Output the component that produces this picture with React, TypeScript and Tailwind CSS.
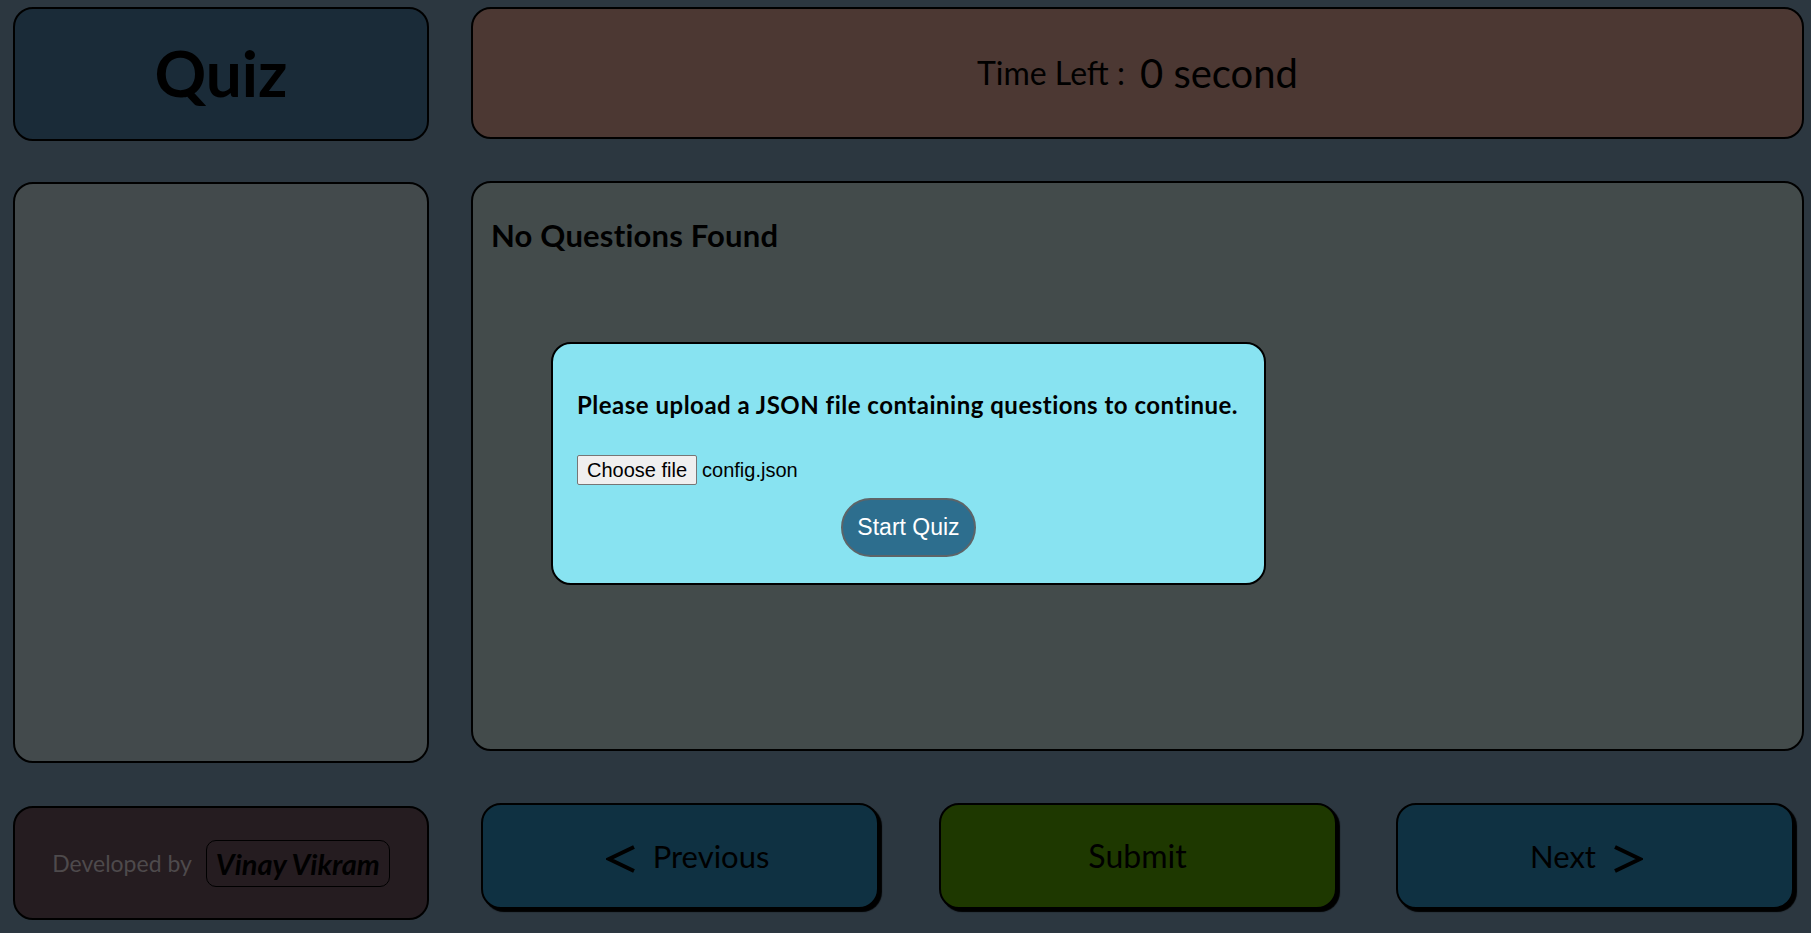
import React from "react";

const ubuntu = { fontFamily: "Lato, 'Open Sans', sans-serif" };
const arial = { fontFamily: "'Liberation Sans', Arial, sans-serif" };

function NavButton({
  bg,
  extra,
  children,
}: {
  bg: string;
  extra?: string;
  children: React.ReactNode;
}) {
  return (
    <button
      className={`w-[398px] h-[106px] rounded-[20px] border-2 border-black shadow-[3px_3px_1px_#000] flex items-center justify-center gap-[17px] text-black ${bg} ${extra ?? ""}`}
    >
      {children}
    </button>
  );
}

function Chevron({ dir }: { dir: "left" | "right" }) {
  return (
    <svg width="30" height="30" viewBox="0 0 30 30" className="mt-[6px]">
      <polyline
        points={dir === "left" ? "28,3 3,15 28,27" : "2,3 27,15 2,27"}
        fill="none"
        stroke="#000"
        strokeWidth="4"
        strokeLinejoin="miter"
      />
    </svg>
  );
}

export default function App() {
  return (
    <div
      className="w-[1811px] h-[933px] bg-[#2c3740] flex pl-[13px] pr-[7px] pt-[7px] gap-[42px] overflow-hidden"
      style={ubuntu}
    >
      {/* Left column */}
      <div className="w-[416px] flex flex-col shrink-0">
        <div className="h-[134px] rounded-[20px] border-2 border-black bg-[#1a2b38] flex items-center justify-center">
          <h1 className="text-[64px] font-bold text-black leading-none pb-[2px]">Quiz</h1>
        </div>
        <div className="mt-[41px] h-[581px] rounded-[20px] border-2 border-black bg-[#434a4c]" />
        <div className="mt-[43px] h-[114px] rounded-[20px] border-2 border-black bg-[#251c20] flex items-center justify-center gap-[14px]">
          <span className="text-[23px] text-[#4e4a4c] leading-none">Developed by</span>
          <span className="h-[47px] px-[9px] rounded-[10px] border-[1.5px] border-black flex items-center text-[29px] font-bold italic text-black leading-none">
            Vinay Vikram
          </span>
        </div>
      </div>

      {/* Right column */}
      <div className="w-[1333px] flex flex-col shrink-0">
        <div className="h-[132px] rounded-[20px] border-2 border-black bg-[#4c3833] flex items-center justify-center gap-[15px] text-black">
          <span className="text-[32px] leading-none">Time Left :</span>
          <span className="text-[40px] leading-none">0 second</span>
        </div>

        <div className="mt-[42px] h-[570px] rounded-[20px] border-2 border-black bg-[#434b4b] pl-[18px] pt-[34px]">
          <h2 className="text-[31px] font-bold text-black leading-[36px] tracking-[0.2px]">No Questions Found</h2>
          <div className="mt-[89px] ml-[60px] w-[715px] h-[243px] rounded-[20px] border-2 border-black bg-[#88e3f1] pl-[24px] pt-[47px] flex flex-col">
            <p className="text-[24px] font-bold text-black leading-[28px] tracking-[0.5px]">
              Please upload a JSON file containing questions to continue.
            </p>
            <div className="mt-[36px] flex items-center gap-[5px] h-[30px]" style={arial}>
              <span className="h-[30px] px-[9px] flex items-center bg-[#efefef] border border-[#767676] rounded-[2px] text-[20px] text-black leading-none">
                Choose file
              </span>
              <span className="text-[20px] text-black leading-none">config.json</span>
            </div>
            <div className="mt-[13px] flex justify-center pr-[24px]">
              <button
                className="h-[59px] px-[14px] rounded-full bg-[#2d6e8e] border-2 border-[#5d6468] text-white text-[23px] leading-none"
                style={arial}
              >
                Start Quiz
              </button>
            </div>
          </div>
        </div>

        <div className="mt-[52px] flex justify-between pl-[10px] pr-[10px]">
          <NavButton bg="bg-[#0f3142]" extra="pl-[15px]">
            <Chevron dir="left" />
            <span className="text-[31px] leading-none">Previous</span>
          </NavButton>
          <NavButton bg="bg-[#1e3800]">
            <span className="text-[32px] leading-none">Submit</span>
          </NavButton>
          <NavButton bg="bg-[#0f3142]" extra="pr-[17px]">
            <span className="text-[31px] leading-none">Next</span>
            <Chevron dir="right" />
          </NavButton>
        </div>
      </div>
    </div>
  );
}
